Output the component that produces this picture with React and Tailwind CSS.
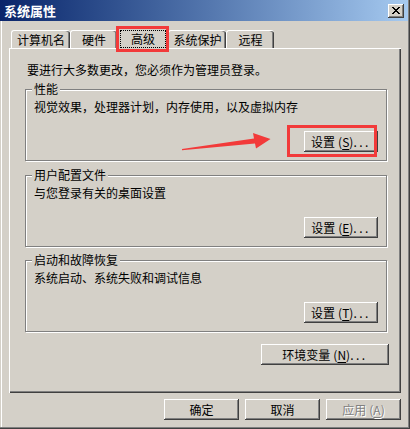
import React from 'react'

const font = "font-['Noto_Sans_CJK_SC',sans-serif]"

const raised = "bg-[#d4d0c8] shadow-[inset_-1px_-1px_#404040,inset_1px_1px_#ffffff,inset_-2px_-2px_#808080,inset_2px_2px_#d4d0c8]"

const Button = ({ width, disabled, children, className = "" }) => (
    <button
        type="button"
        className={`flex h-[21px] items-center justify-center text-[12px] leading-[14px] ${raised} ${width} ${className} ${disabled ? "text-[#808080] [text-shadow:1px_1px_0_#ffffff]" : "text-black"}`}>
        {children}
    </button>
)

const Mnemonic = ({ k }) => (
    <span className="ml-[3px] flex items-center">
        (<span className="underline underline-offset-2">{k}</span>)
        <span className="tracking-[2.5px]">...</span>
    </span>
)

const Tab = ({ label, width, selected }) => {
    if (selected) {
        return (
            <div className={`relative z-10 -mb-px flex h-[23px] rounded-t-[3px] border-l border-t border-white bg-[#d4d0c8] px-[2px] pb-[1px] pt-[3px] shadow-[inset_-1px_0_#404040,inset_-2px_0_#808080] ${width}`}>
                <span className="flex h-[18px] flex-1 items-center justify-center border border-dotted border-black text-[12px] leading-[14px]">
                    {label}
                </span>
            </div>
        )
    }
    return (
        <div className={`flex h-[18px] items-center justify-center rounded-t-[3px] border-l border-t border-white text-[12px] leading-[14px] shadow-[inset_-1px_0_#404040,inset_-2px_0_#808080] ${width}`}>
            {label}
        </div>
    )
}

const Group = ({ title, desc, mnemonic, className = "" }) => (
    <div className={`relative flex h-[72px] flex-col border border-[#808080] pl-[8px] pr-[8px] pt-[10px] shadow-[1px_1px_0_#ffffff,inset_1px_1px_0_#ffffff] ${className}`}>
        <span className="absolute left-[6px] top-[-8px] bg-[#d4d0c8] px-[2px] text-[12px] leading-[14px]">{title}</span>
        <p className="text-[12px] leading-[14px]">{desc}</p>
        <Button width="w-[74px]" className="mt-[17px] self-end">
            设置<Mnemonic k={mnemonic} />
        </Button>
    </div>
)

export default function App() {
    return (
        <div className={`relative flex h-[429px] w-[410px] flex-col bg-[#d4d0c8] text-black ${font} shadow-[inset_-1px_-1px_#404040,inset_-2px_-2px_#808080,inset_1px_0_#d4d0c8,inset_2px_0_#ffffff]`}>
            {/* title bar */}
            <div className="mr-[2px] flex h-[21px] items-center justify-between bg-gradient-to-r from-[#0a246a] to-[#a6caf0] pl-[4px] pr-[4px]">
                <span className="text-[13px] font-bold leading-[15px] text-white">系统属性</span>
                <div className={`flex h-[14px] w-[16px] items-center justify-center ${raised}`}>
                    <svg width="8" height="7" viewBox="0 0 8 7" shapeRendering="crispEdges">
                        <path fill="#000" d="M0 0h2v1h1v1h2v-1h1v-1h2v1h-1v1h-1v1h-1v1h1v1h1v1h1v1h-2v-1h-1v-1h-2v1h-1v1h-2v-1h1v-1h1v-1h1v-1h-1v-1h-1v-1h-1z" />
                    </svg>
                </div>
            </div>

            <div className="flex flex-1 flex-col px-[9px] pt-[5px]">
                {/* tabs */}
                <div className="flex h-[22px] items-end pl-[2px]">
                    <Tab label="计算机名" width="w-[59px]" />
                    <Tab label="硬件" width="w-[47px]" />
                    <Tab label="高级" width="w-[51px]" selected />
                    <Tab label="系统保护" width="w-[58px]" />
                    <Tab label="远程" width="w-[48px]" />
                </div>

                {/* tab page */}
                <div className="flex h-[345px] flex-col border-l border-t border-white pl-[15px] pr-[14px] pt-[14px] shadow-[inset_-1px_-1px_#404040,inset_-2px_-2px_#808080]">
                    <p className="ml-[2px] text-[12px] leading-[14px]">要进行大多数更改，您必须作为管理员登录。</p>
                    <Group className="mt-[12px]" title="性能" desc="视觉效果，处理器计划，内存使用，以及虚拟内存" mnemonic="S" />
                    <Group className="mt-[14px]" title="用户配置文件" desc="与您登录有关的桌面设置" mnemonic="E" />
                    <Group className="mt-[13px]" title="启动和故障恢复" desc="系统启动、系统失败和调试信息" mnemonic="T" />
                    <Button width="w-[128px]" className="-mr-[2px] mt-[12px] self-end">
                        环境变量<Mnemonic k="N" />
                    </Button>
                </div>

                {/* dialog buttons */}
                <div className="mt-[6px] flex justify-end gap-[6px]">
                    <Button width="w-[75px]">确定</Button>
                    <Button width="w-[75px]">取消</Button>
                    <Button width="w-[75px]" disabled>
                        应用<span className="ml-[3px]">(<span className="underline underline-offset-2">A</span>)</span>
                    </Button>
                </div>
            </div>

            {/* red annotations */}
            <div className="absolute left-[116px] top-[26px] z-20 h-[26px] w-[53px] border-[3px] border-[#f23a3a]" />
            <div className="absolute left-[287px] top-[125px] z-20 h-[32px] w-[90px] border-[3px] border-[#f23a3a]" />
            <svg className="absolute left-0 top-0 z-20" width="410" height="429" viewBox="0 0 410 429">
                <polygon fill="#f23a3a" points="182,149 254,138.5 253,133 270.5,139 256,148.5 255,143.5 182,150.2" />
            </svg>
        </div>
    )
}
